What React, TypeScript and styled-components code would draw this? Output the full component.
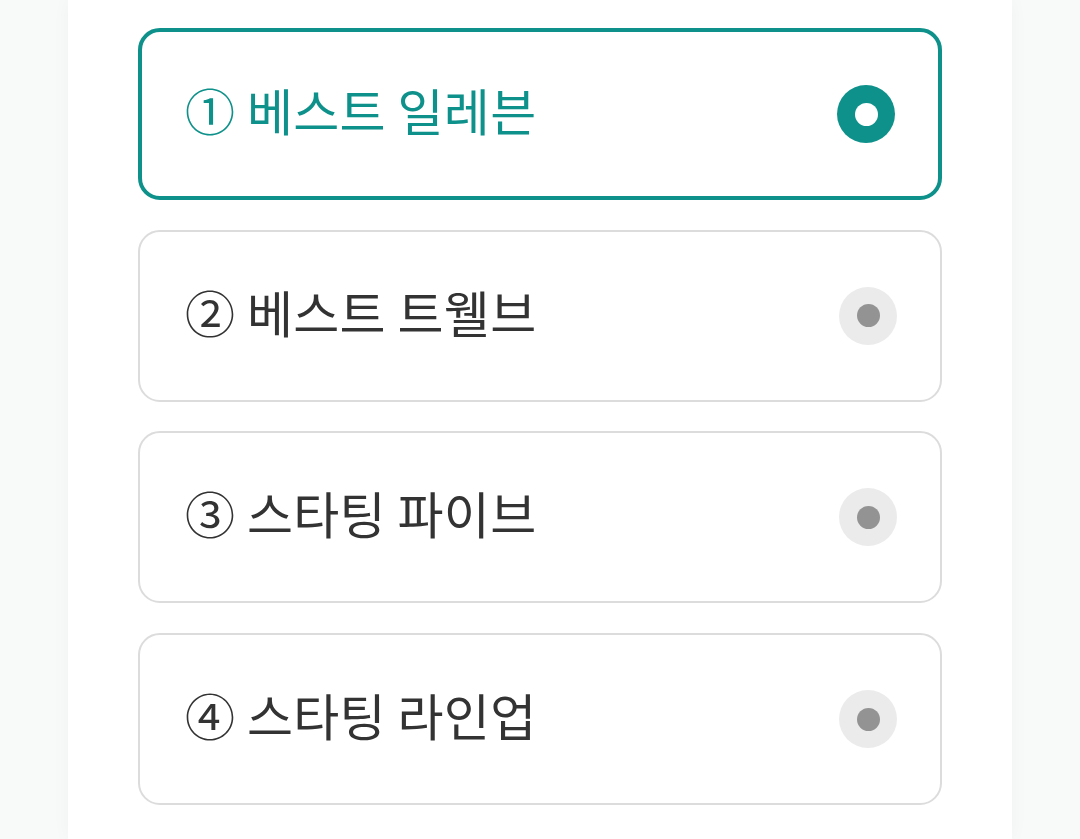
import React, { useState } from 'react';
import styled, { createGlobalStyle } from 'styled-components';

const GlobalStyle = createGlobalStyle`
  * {
    margin: 0;
    padding: 0;
    box-sizing: border-box;
  }
  body {
    background: #f8f9f9;
    font-family: "Noto Sans CJK KR", "Noto Sans", sans-serif;
  }
`;

const Page = styled.div`
  display: flex;
  justify-content: center;
  min-height: 839px;
`;

const Panel = styled.div`
  width: 944px;
  background: #ffffff;
  box-shadow: 0 0 18px rgba(0, 0, 0, 0.035);
  padding: 28px 70px 30px;
  display: flex;
  flex-direction: column;
  gap: 29.7px;
`;

const Option = styled.button<{ $selected: boolean }>`
  display: flex;
  align-items: center;
  justify-content: space-between;
  height: 172px;
  width: 100%;
  padding: 0 43px 0 ${(p) => (p.$selected ? '43px' : '45px')};
  background: #ffffff;
  border: ${(p) => (p.$selected ? '4px solid #0e918a' : '2px solid #dcdcdc')};
  border-radius: 22px;
  cursor: pointer;
  text-align: left;
  font-family: inherit;
`;

const Label = styled.span<{ $selected: boolean }>`
  font-size: 50px;
  font-weight: 400;
  line-height: 1;
  letter-spacing: 0.35px;
  padding-bottom: 10px;
  color: ${(p) => (p.$selected ? '#0e918a' : '#333333')};
  white-space: nowrap;
`;

const Radio = styled.span<{ $selected: boolean }>`
  width: 58px;
  height: 58px;
  border-radius: 50%;
  background: ${(p) => (p.$selected ? '#0e918a' : '#ebebeb')};
  display: flex;
  align-items: center;
  justify-content: center;
  flex-shrink: 0;

  &::after {
    content: '';
    width: 23px;
    height: 23px;
    border-radius: 50%;
    background: ${(p) => (p.$selected ? '#ffffff' : '#939393')};
  }
`;

const options = ['① 베스트 일레븐', '② 베스트 트웰브', '③ 스타팅 파이브', '④ 스타팅 라인업'];

const App: React.FC = () => {
  const [selected, setSelected] = useState(0);

  return (
    <Page>
      <GlobalStyle />
      <Panel>
        {options.map((text, i) => (
          <Option key={text} $selected={selected === i} onClick={() => setSelected(i)}>
            <Label $selected={selected === i}>{text}</Label>
            <Radio $selected={selected === i} />
          </Option>
        ))}
      </Panel>
    </Page>
  );
};

export default App;
